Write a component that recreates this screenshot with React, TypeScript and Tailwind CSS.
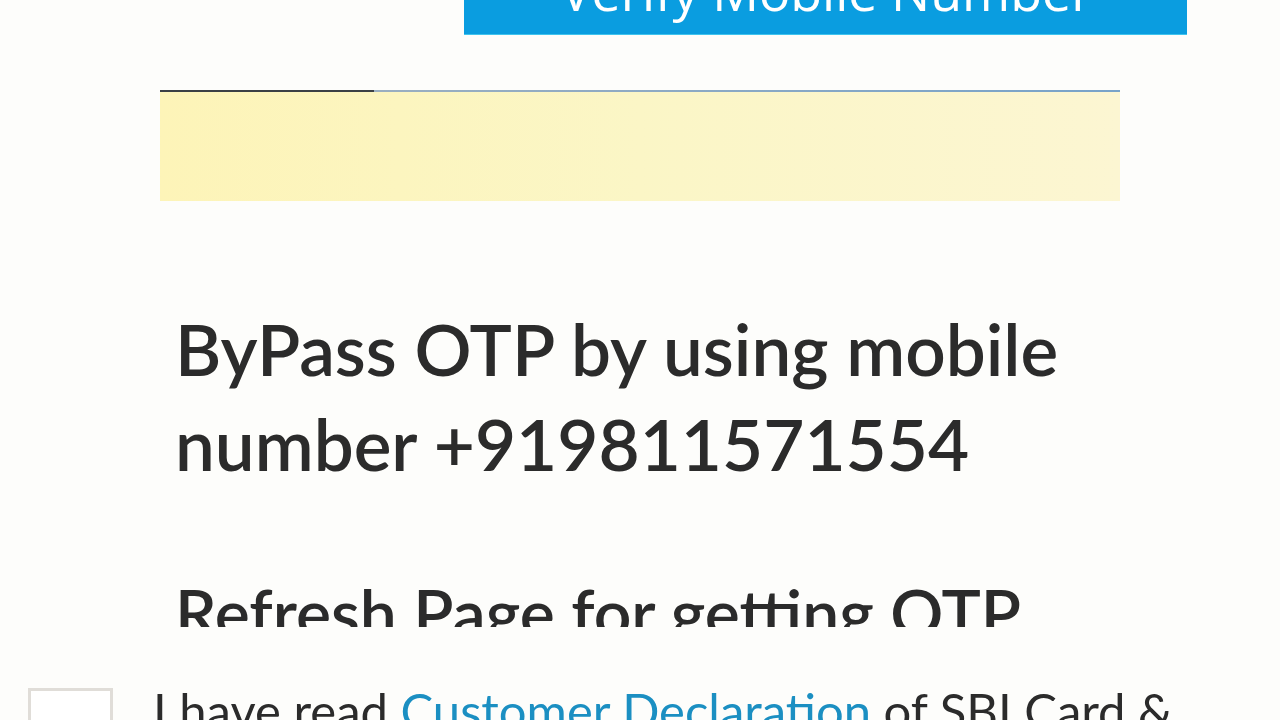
export default function App() {
	return (
		<div className="w-[1280px] h-[720px] overflow-hidden bg-[#fdfdfb] font-['Lato',sans-serif]">
			{/* Verify button, scrolled mostly off the top */}
			<div className="flex pl-[464px] h-[35px] overflow-hidden">
				<div className="w-[723px] h-[35px] bg-[#0a9de0] border-b border-[#3fc4ee] flex items-end justify-center overflow-hidden">
					<span className="text-white text-[52px] leading-none font-['Open_Sans',sans-serif] -translate-y-[17px] pl-[2px]">
						Verify Mobile Number
					</span>
				</div>
			</div>

			{/* progress + notice box */}
			<div className="mt-[55px] ml-[160px] w-[960px]">
				<div className="flex h-[2px]">
					<div className="w-[214px] bg-[#3b4045]" />
					<div className="flex-1 bg-gradient-to-r from-[#9aaec0] to-[#78a3c9]" />
				</div>
				<div className="h-[109px] bg-gradient-to-r from-[#fdf4b8] via-[#fbf6c6] to-[#fcf6d2]" />
			</div>

			{/* message */}
			<div className="pl-[175px] mt-[100px] text-[#2b2b2b] font-semibold">
				<p className="text-[71px] leading-[95px]">
					ByPass OTP by using mobile
					<br />
					number +919811571554
				</p>
				<div className="mt-[94px] h-[42px] overflow-hidden">
					<p className="text-[66px] leading-[54px]">Refresh Page for getting OTP</p>
				</div>
			</div>

			{/* declaration */}
			<div className="mt-[51px] pl-[28px] flex items-start gap-[40px]">
				<div className="w-[85px] h-[60px] mt-[10px] border-[3px] border-[#e0ddd8] bg-white shrink-0" />
				<p className="text-[49px] leading-[60px] mt-[2px] text-[#2b2b2b] whitespace-nowrap">
					I have read <span className="text-[#1b8fc2]">Customer Declaration</span> of SBI Card &amp;
				</p>
			</div>
		</div>
	);
}
